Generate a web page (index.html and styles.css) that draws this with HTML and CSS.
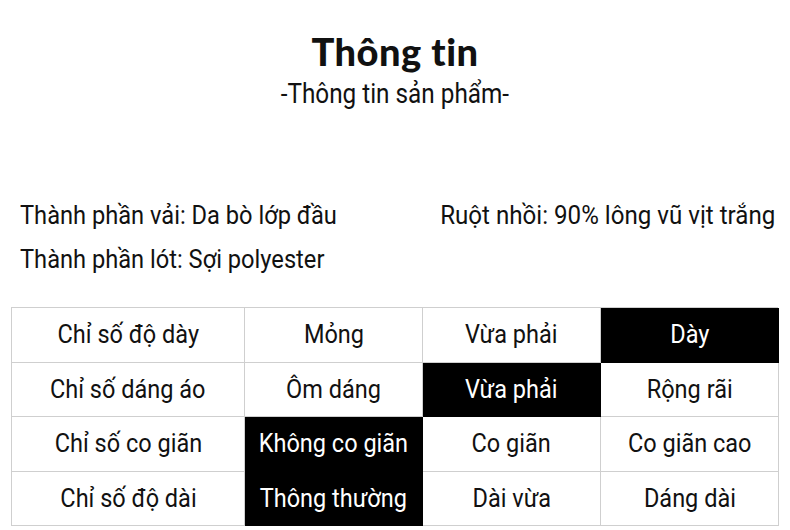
FILE: index.html
```html
<!DOCTYPE html>
<html lang="vi">
<head>
<meta charset="utf-8">
<link rel="stylesheet" href="styles.css">
</head>
<body>
<div class="page">
  <h1 class="title">Thông tin</h1>
  <p class="subtitle"><span class="cond">-Thông tin sản phẩm-</span></p>
  <div class="info">
    <div class="info-row">
      <span class="cond left">Thành phần vải: Da bò lớp đầu</span>
      <span class="cond right">Ruột nhồi: 90% lông vũ vịt trắng</span>
    </div>
    <div class="info-row">
      <span class="cond left">Thành phần lót: Sợi polyester</span>
    </div>
  </div>
  <div class="table">
    <div class="cell"><span class="cond">Chỉ số độ dày</span></div>
    <div class="cell"><span class="cond">Mỏng</span></div>
    <div class="cell"><span class="cond">Vừa phải</span></div>
    <div class="cell on"><span class="cond">Dày</span></div>
    <div class="cell"><span class="cond">Chỉ số dáng áo</span></div>
    <div class="cell"><span class="cond">Ôm dáng</span></div>
    <div class="cell on"><span class="cond">Vừa phải</span></div>
    <div class="cell"><span class="cond">Rộng rãi</span></div>
    <div class="cell"><span class="cond">Chỉ số co giãn</span></div>
    <div class="cell on"><span class="cond">Không co giãn</span></div>
    <div class="cell"><span class="cond">Co giãn</span></div>
    <div class="cell"><span class="cond">Co giãn cao</span></div>
    <div class="cell"><span class="cond">Chỉ số độ dài</span></div>
    <div class="cell on"><span class="cond">Thông thường</span></div>
    <div class="cell"><span class="cond">Dài vừa</span></div>
    <div class="cell"><span class="cond">Dáng dài</span></div>
  </div>
</div>
</body>
</html>
```
FILE: styles.css
```css
html, body {
  margin: 0;
  padding: 0;
  background: #fff;
}
.page {
  width: 790px;
  height: 530px;
  overflow: hidden;
  color: #111;
  font-family: "Roboto", "Liberation Sans", sans-serif;
}
.cond {
  display: inline-block;
  white-space: nowrap;
  transform: scaleX(0.94);
}
.title {
  margin: 0;
  padding-top: 28px;
  text-align: center;
  font-family: "Lato", "DejaVu Sans", sans-serif;
  font-weight: 900;
  font-size: 38px;
  line-height: 46px;
  letter-spacing: 0.5px;
}
.subtitle {
  margin: 0;
  text-align: center;
  font-size: 27px;
  line-height: 40px;
}
.subtitle .cond {
  transform: scaleX(0.9);
}
.info {
  margin-top: 80px;
  padding: 0 15px 0 20px;
  font-size: 25px;
  line-height: 44px;
}
.info-row {
  display: flex;
  justify-content: space-between;
}
.info .left {
  transform-origin: left center;
  transform: scaleX(0.946);
}
.info .right {
  transform-origin: right center;
  transform: scaleX(0.965);
}
.table {
  margin: 25px 0 0 11px;
  width: 767px;
  display: grid;
  grid-template-columns: 233px 178px 178px 178px;
  grid-auto-rows: 54.5px;
  border-top: 1px solid #cfcfcf;
  border-left: 1px solid #cfcfcf;
  box-sizing: border-box;
}
.cell {
  display: flex;
  align-items: center;
  justify-content: center;
  border-right: 1px solid #cfcfcf;
  border-bottom: 1px solid #cfcfcf;
  font-size: 25px;
}
.cell.on {
  background: #000;
  color: #fff;
  border-color: #000;
}
```
